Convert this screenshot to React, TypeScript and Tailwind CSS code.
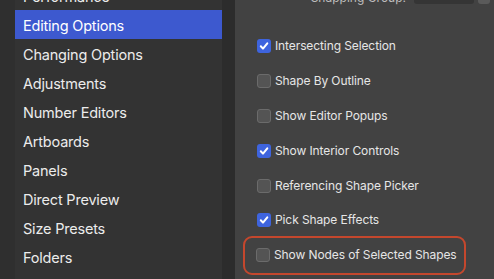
import React from 'react';

const SIDEBAR_ITEMS = [
  'Performance',
  'Editing Options',
  'Changing Options',
  'Adjustments',
  'Number Editors',
  'Artboards',
  'Panels',
  'Direct Preview',
  'Size Presets',
  'Folders',
];

const OPTIONS = [
  { label: 'Intersecting Selection', checked: true },
  { label: 'Shape By Outline', checked: false },
  { label: 'Show Editor Popups', checked: false },
  { label: 'Show Interior Controls', checked: true },
  { label: 'Referencing Shape Picker', checked: false },
  { label: 'Pick Shape Effects', checked: true },
  { label: 'Show Nodes of Selected Shapes', checked: false, highlight: true },
];

function Checkbox({ checked }: { checked: boolean }) {
  if (checked) {
    return (
      <span className="flex h-[14px] w-[14px] shrink-0 items-center justify-center rounded-[3px] bg-[#3e64de]">
        <svg width="10" height="10" viewBox="0 0 10 10" fill="none">
          <path d="M1.8 5.2 L4 7.6 L8.3 2.3" stroke="white" strokeWidth="2" strokeLinecap="round" strokeLinejoin="round" />
        </svg>
      </span>
    );
  }
  return (
    <span className="h-[14px] w-[14px] shrink-0 rounded-[3px] border border-[#6b6b6b] bg-[#545454]" />
  );
}

export default function App() {
  return (
    <div
      className="flex h-[279px] w-[494px] overflow-hidden bg-[#2c2c2c] text-white"
      style={{ fontFamily: 'Inter, "Liberation Sans", sans-serif' }}
    >
      <div className="w-[15px] shrink-0 bg-[#2f2f2f]" />

      {/* sidebar list, scrolled */}
      <div className="w-[207px] shrink-0 overflow-hidden bg-[#333333]">
        <div className="-mt-[19px] flex flex-col">
          {SIDEBAR_ITEMS.map((item, i) => (
            <div
              key={item}
              className={`flex h-[29px] items-center whitespace-nowrap px-2 pt-[2px] text-[14.5px] tracking-[-0.2px] text-[#ececec] ${
                i === 1 ? 'bg-[#3d59cf] text-white' : ''
              }`}
            >
              {item}
            </div>
          ))}
        </div>
      </div>

      <div className="w-[13px] shrink-0 bg-[#2c2c2c]" />

      {/* settings panel */}
      <div className="relative flex-1 overflow-hidden bg-[#424242]">
        <div className="-mt-[8px] flex h-[12px] items-center justify-end gap-1 pr-1 text-[12px] text-[#bdbdbd]">
          <span className="mr-1 whitespace-nowrap">Snapping Group:</span>
          <span className="h-[12px] w-[60px] rounded-[3px] bg-[#353535]" />
          <span className="h-[12px] w-[12px] rounded-[3px] bg-[#5a5a5a]" />
        </div>

        <div className="flex flex-col pl-[22px] pt-[25px]">
          {OPTIONS.map(opt => (
            <div key={opt.label} className="flex h-[34.8px] items-center">
              {opt.highlight ? (
                <div className="-ml-[14px] flex h-[39px] w-[223px] shrink-0 items-center gap-[4px] rounded-[9px] border-[2.5px] border-[#c4472d] pl-[11px]">
                  <Checkbox checked={opt.checked} />
                  <span className="whitespace-nowrap text-[12px] tracking-[-0.1px] text-[#e6e6e6]">{opt.label}</span>
                </div>
              ) : (
                <div className="flex items-center gap-[4px]">
                  <Checkbox checked={opt.checked} />
                  <span className="whitespace-nowrap text-[12px] tracking-[-0.1px] text-[#e6e6e6]">{opt.label}</span>
                </div>
              )}
            </div>
          ))}
        </div>
      </div>
    </div>
  );
}
